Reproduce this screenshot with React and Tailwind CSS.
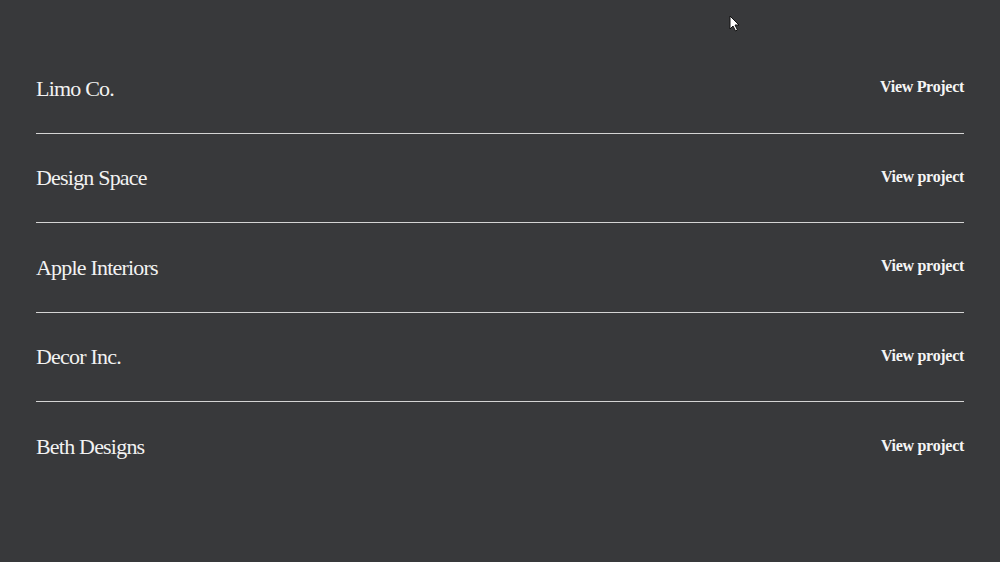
const projects = [
  { name: 'Limo Co.', link: 'View Project' },
  { name: 'Design Space', link: 'View project' },
  { name: 'Apple Interiors', link: 'View project' },
  { name: 'Decor Inc.', link: 'View project' },
  { name: 'Beth Designs', link: 'View project' }
]

function Cursor() {
  return (
    <svg className="absolute left-[729px] top-[15px]" width="11" height="17" viewBox="0 0 11 17">
      <path d="M1 1 L1 14 L4 11 L6.5 16 L8.5 15 L6 10 L10 10 Z" fill="#fff" stroke="#111" strokeWidth="1" />
    </svg>
  )
}

export default function App() {
  return (
    <div className="relative h-[562px] w-full overflow-hidden bg-[#38393b] px-9 pt-[44px] font-['Liberation_Serif',serif] text-white">
      <Cursor />
      <ul>
        {projects.map((project, index) => (
          <li
            key={project.name}
            className={`flex h-[89.5px] items-center justify-between ${
              index < projects.length - 1 ? 'border-b border-[#d4d4d4]' : ''
            }`}
          >
            <span className="text-[22px] tracking-[-0.8px] text-[#f2f2f2]">{project.name}</span>
            <a href="#" className="-mt-0.5 text-[16px] font-bold tracking-[-0.3px] text-[#f5f5f5]">
              {project.link}
            </a>
          </li>
        ))}
      </ul>
    </div>
  )
}
